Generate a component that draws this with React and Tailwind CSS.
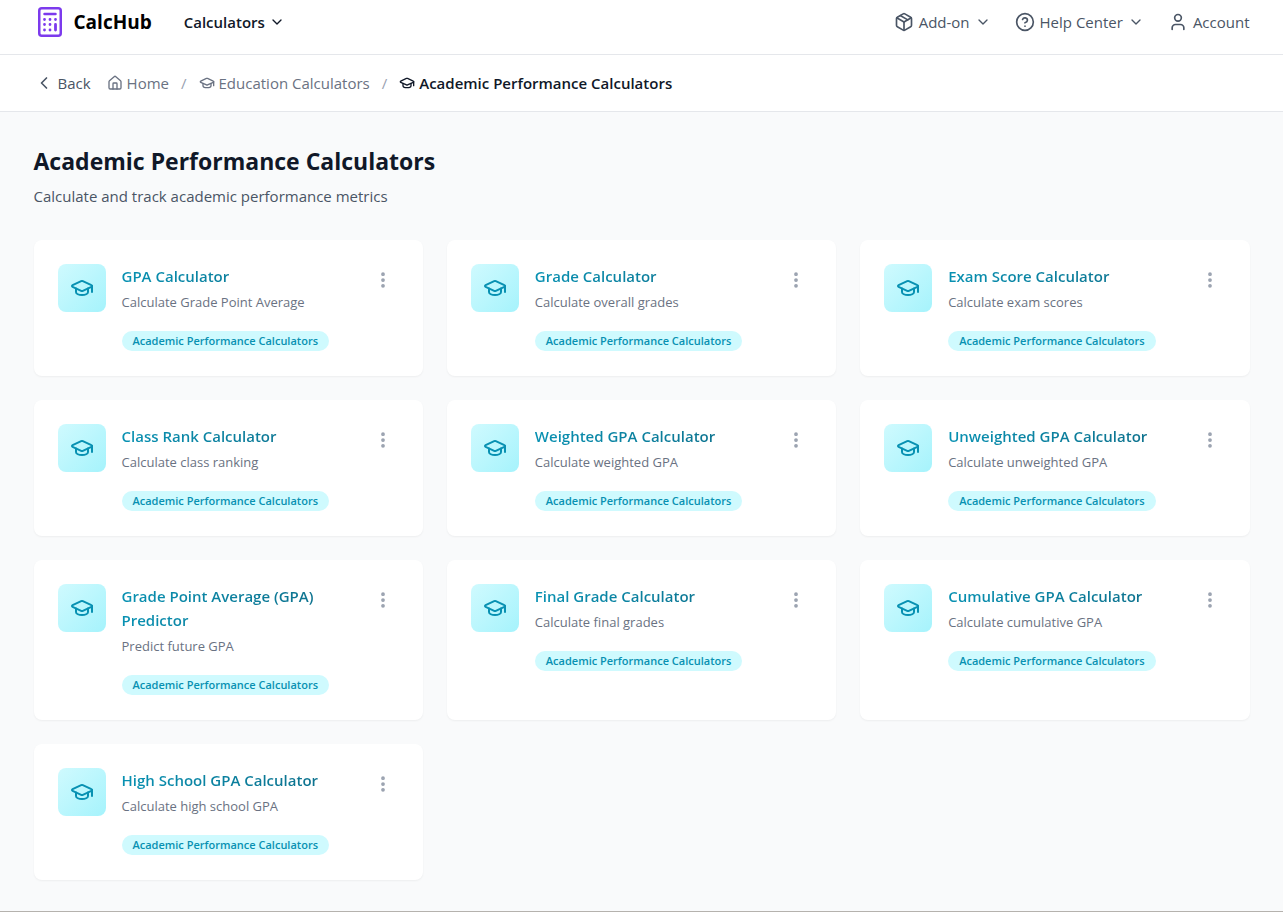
import { ChevronDown, ChevronLeft, CircleQuestionMark, House, GraduationCap, Package, User, EllipsisVertical } from 'lucide-react';

const CATEGORY = 'Academic Performance Calculators';

const calculators = [
  { name: 'GPA Calculator', text: 'Calculate Grade Point Average' },
  { name: 'Grade Calculator', text: 'Calculate overall grades' },
  { name: 'Exam Score Calculator', text: 'Calculate exam scores' },
  { name: 'Class Rank Calculator', text: 'Calculate class ranking' },
  { name: 'Weighted GPA Calculator', text: 'Calculate weighted GPA' },
  { name: 'Unweighted GPA Calculator', text: 'Calculate unweighted GPA' },
  { name: 'Grade Point Average (GPA) Predictor', text: 'Predict future GPA' },
  { name: 'Final Grade Calculator', text: 'Calculate final grades' },
  { name: 'Cumulative GPA Calculator', text: 'Calculate cumulative GPA' },
  { name: 'High School GPA Calculator', text: 'Calculate high school GPA' },
];

function Logo() {
  return (
    <svg viewBox="0 0 24 30" className="h-[30px] w-6 text-[#7c3aed]" fill="none" stroke="currentColor" aria-hidden="true">
      <rect x="1.25" y="1.25" width="21.5" height="27.5" rx="2.5" strokeWidth="2.5" />
      <path d="M6.5 7h11" strokeWidth="2.5" strokeLinecap="round" />
      <path
        d="M6.5 12.5h.01M12 12.5h.01M17.5 12.5h.01M6.5 17.5h.01M12 17.5h.01M6.5 23h.01M12 23h.01M17.5 17.5V23"
        strokeWidth="2.8"
        strokeLinecap="round"
      />
    </svg>
  );
}

function Header() {
  return (
    <header className="border-b border-gray-200 bg-white">
      <div className="mx-auto flex max-w-7xl items-center justify-between px-8 pt-[7px] pb-[17px]">
        <div className="flex items-center gap-8">
          <a href="#" className="flex items-center gap-3 pl-1 text-[19px] font-bold text-black">
            <Logo />
            CalcHub
          </a>
          <button type="button" className="flex items-center gap-1 font-semibold text-gray-900">
            Calculators
            <ChevronDown className="size-4" />
          </button>
        </div>
        <nav aria-label="Main" className="flex items-center gap-6 text-gray-600">
          <button type="button" className="flex items-center gap-[5px]">
            <Package className="size-5" />
            Add-on
            <ChevronDown className="size-4" />
          </button>
          <button type="button" className="flex items-center gap-[5px]">
            <CircleQuestionMark className="size-5" />
            Help Center
            <ChevronDown className="size-4" />
          </button>
          <a href="#" className="flex items-center gap-[5px]">
            <User className="size-5" />
            Account
          </a>
        </nav>
      </div>
    </header>
  );
}

function Breadcrumbs() {
  return (
    <div className="border-b border-gray-200 bg-white">
      <div className="mx-auto flex max-w-7xl items-center gap-4 px-8 py-4">
        <button type="button" className="flex items-center gap-1 text-gray-600">
          <ChevronLeft className="size-5" />
          Back
        </button>
        <nav aria-label="Breadcrumb">
          <ol className="flex items-center gap-3 text-gray-500">
            <li>
              <a href="#" className="flex items-center gap-1">
                <House className="size-4" />
                Home
              </a>
            </li>
            <li aria-hidden="true" className="text-gray-400">/</li>
            <li>
              <a href="#" className="flex items-center gap-1">
                <GraduationCap className="size-4" />
                Education Calculators
              </a>
            </li>
            <li aria-hidden="true" className="text-gray-400">/</li>
            <li aria-current="page" className="flex items-center gap-1 font-semibold text-gray-900">
              <GraduationCap className="size-4" />
              {CATEGORY}
            </li>
          </ol>
        </nav>
      </div>
    </div>
  );
}

function Card({ name, text }) {
  return (
    <article className="flex items-start rounded-lg bg-white p-6 shadow-[0_1px_2px_0_rgba(0,0,0,0.05)]">
      <div className="mr-4 flex size-12 shrink-0 items-center justify-center rounded-lg bg-gradient-to-br from-[#cffafe] to-[#a5f3fc] text-[#0891b2]">
        <GraduationCap className="size-6" />
      </div>
      <div className="min-w-0 flex-1">
        <h2 className="font-semibold">
          <a href="#" className="block bg-gradient-to-r from-[#0891b2] to-[#0e6b86] bg-clip-text text-transparent">
            {name}
          </a>
        </h2>
        <p className="mt-1 text-[13px] leading-5 text-gray-500">{text}</p>
        <div className="mt-4 flex h-6 items-end pb-px">
          <span className="rounded-full bg-[#cffafe] px-[11px] py-0.5 text-[11px] leading-4 font-semibold text-[#0891b2]">
            {CATEGORY}
          </span>
        </div>
      </div>
      <button type="button" aria-label={`Options for ${name}`} className="p-1.5 text-gray-400">
        <EllipsisVertical className="size-5" strokeWidth={2.5} />
      </button>
    </article>
  );
}

export default function App() {
  return (
    <div className="min-h-screen border-b border-[#b5b2ae] bg-gray-50 font-['Open_Sans','Noto_Sans',sans-serif] text-[15px] leading-6">
      <Header />
      <Breadcrumbs />
      <main className="mx-auto max-w-7xl px-8 pt-8 pb-6">
        <h1 className="text-[23px] leading-[34px] font-bold text-gray-900">{CATEGORY}</h1>
        <p className="mt-1.5 text-gray-600">Calculate and track academic performance metrics</p>
        <div className="mt-8 grid gap-6 md:grid-cols-2 lg:grid-cols-3">
          {calculators.map((c) => (
            <Card key={c.name} {...c} />
          ))}
        </div>
      </main>
    </div>
  );
}
